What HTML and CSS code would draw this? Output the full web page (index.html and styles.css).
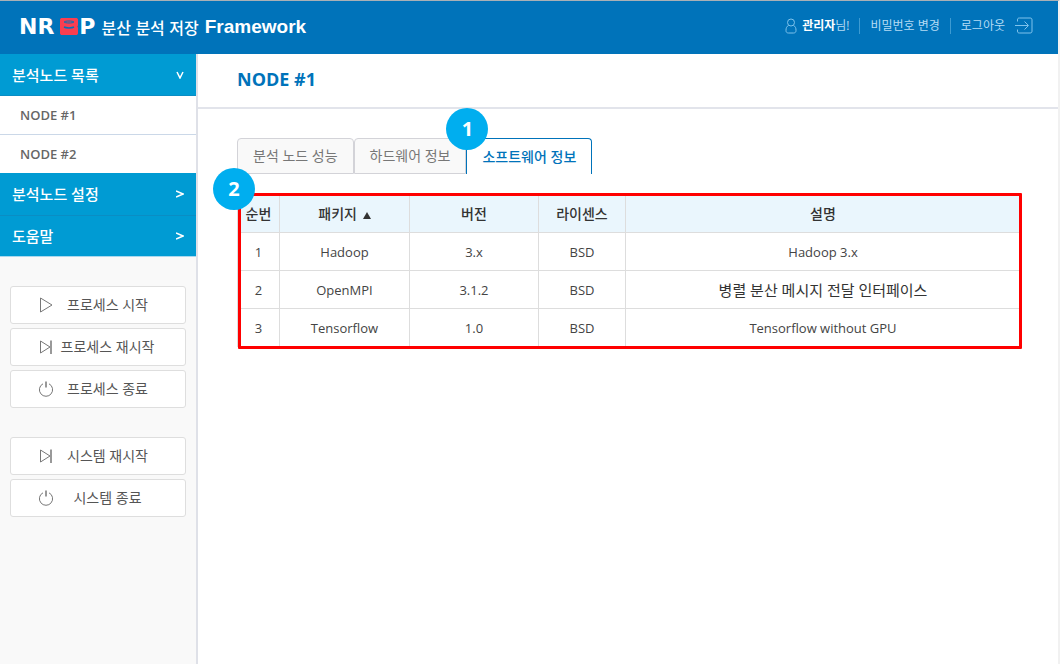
FILE: index.html
```html
<!DOCTYPE html>
<html lang="ko">
<head>
<meta charset="utf-8">
<title>NRBP 분산 분석 저장 Framework</title>
<link rel="stylesheet" href="styles.css">
</head>
<body>
<svg class="sprite" aria-hidden="true">
  <symbol id="play" viewBox="0 0 16 16"><path d="M2.500 1v14L14 8z"/></symbol>
  <symbol id="restart" viewBox="0 0 16 16"><path d="M2.500 2v12L12 8z"/><path d="M13 1.500v13.500" stroke-width="1.500"/></symbol>
  <symbol id="power" viewBox="0 0 16 16"><path d="M5 2.800a6.600 6.600 0 1 0 6 0"/><path d="M8 .5v6" stroke-width="1.500"/></symbol>
</svg>
<header class="topbar">
  <div class="brand">
    <span class="logo">NR<svg class="logo-disk" viewBox="0 0 18 17" aria-hidden="true"><path fill="#fa3e50" d="M0 1.500C0 .6 1 0 2 0h14c1 0 2 .6 2 1.500V7c0 .8-.3 1.300-.8 1.600.5.3.8.8.8 1.600v5.300c0 .9-1 1.500-2 1.500H2c-1 0-2-.6-2-1.500z"/><path fill="none" stroke="#0073ba" d="M4 4c1-1.300 9-1.300 10 0-1 1.300-9 1.300-10 0z"/><path fill="none" stroke="#0073ba" stroke-width="1.500" d="M4 9c2 1.200 8 1.200 10 0"/></svg>P</span>
    <span class="brand-ko">분산 분석 저장</span>
    <span class="brand-en">Framework</span>
  </div>
  <nav class="account">
    <span class="user"><svg class="user-icon" viewBox="0 0 12 16" aria-hidden="true"><circle cx="6" cy="4.500" r="3.500"/><path d="M3.500 7.500C1.500 8.500 1 10 1 12.500c0 1.600.8 2.500 2.500 2.500h5c1.700 0 2.500-.9 2.500-2.500 0-2.500-.5-4-2.500-5"/></svg><span><strong>관리자</strong>님!</span></span>
    <a class="account-link" href="#">비밀번호 변경</a>
    <a class="account-link" href="#">로그아웃<svg class="logout-icon" viewBox="0 0 18 17" aria-hidden="true"><path d="M2.500 4.500V3c0-1.500.5-2 2-2h10.500c1.500 0 2 .5 2 2v11c0 1.500-.5 2-2 2H4.500c-1.500 0-2-.5-2-2v-1.500M0 8.500h13M9.500 4.500l4 4-4 4"/></svg></a>
  </nav>
</header>
<div class="layout">
  <aside class="sidebar">
    <nav class="menu">
      <a class="menu-head" href="#">분석노드 목록<svg class="caret" viewBox="0 0 8 8" aria-hidden="true"><path d="M1 1l3 6 3-6"/></svg></a>
      <a class="menu-node" href="#">NODE #1</a>
      <a class="menu-node" href="#">NODE #2</a>
      <a class="menu-head" href="#">분석노드 설정<svg class="caret" viewBox="0 0 8 8" aria-hidden="true"><path d="M0 1l7 3-7 3"/></svg></a>
      <a class="menu-head" href="#">도움말<svg class="caret" viewBox="0 0 8 8" aria-hidden="true"><path d="M0 1l7 3-7 3"/></svg></a>
    </nav>
    <div class="actions">
      <button class="action" type="button"><svg class="icon"><use href="#play"/></svg><span class="action-label">프로세스 시작</span></button>
      <button class="action" type="button"><svg class="icon"><use href="#restart"/></svg><span class="action-label">프로세스 재시작</span></button>
      <button class="action" type="button"><svg class="icon"><use href="#power"/></svg><span class="action-label">프로세스 종료</span></button>
    </div>
    <div class="actions">
      <button class="action" type="button"><svg class="icon"><use href="#restart"/></svg><span class="action-label">시스템 재시작</span></button>
      <button class="action" type="button"><svg class="icon"><use href="#power"/></svg><span class="action-label">시스템 종료</span></button>
    </div>
  </aside>
  <main class="main">
    <h1 class="title">NODE #1</h1>
    <div class="content">
      <div class="tabs" role="tablist">
        <button class="tab" type="button" role="tab">분석 노드 성능</button>
        <button class="tab" type="button" role="tab">하드웨어 정보</button>
        <button class="tab tab-active" type="button" role="tab" aria-selected="true">소프트웨어 정보<span class="badge badge-tab">1</span></button>
      </div>
      <div class="packages">
        <table class="table">
          <colgroup><col class="col-no"><col class="col-package"><col class="col-version"><col class="col-license"><col></colgroup>
          <thead>
            <tr><th>순번</th><th>패키지 <svg class="sort" viewBox="0 0 8 7" aria-hidden="true"><path d="M4 0l4 7H0z"/></svg></th><th>버전</th><th>라이센스</th><th>설명</th></tr>
          </thead>
          <tbody>
            <tr><td>1</td><td>Hadoop</td><td>3.x</td><td>BSD</td><td>Hadoop 3.x</td></tr>
            <tr><td>2</td><td>OpenMPI</td><td>3.1.2</td><td>BSD</td><td class="ko">병렬 분산 메시지 전달 인터페이스</td></tr>
            <tr><td>3</td><td>Tensorflow</td><td>1.0</td><td>BSD</td><td>Tensorflow without GPU</td></tr>
          </tbody>
        </table>
        <span class="badge badge-table">2</span>
      </div>
    </div>
  </main>
</div>
</body>
</html>
```
FILE: styles.css
```css
* { box-sizing: border-box; }
body {
  margin: 0;
  min-height: 100vh;
  display: flex;
  flex-direction: column;
  border-top: 1px solid #a9b0b6;
  border-right: 2px solid #f1f1f1;
  background: #fff;
  color: #333;
  font: 13px/20px "Open Sans", "Noto Sans CJK KR", sans-serif;
}
a { color: inherit; text-decoration: none; }
button { font: inherit; cursor: pointer; }
.sprite { position: absolute; width: 0; height: 0; }

.topbar {
  display: flex;
  align-items: center;
  justify-content: space-between;
  height: 53px;
  padding: 0 25px 0 19px;
  background: #0073ba;
  color: #fff;
}
.brand { display: flex; align-items: center; gap: 6px; padding-bottom: 2px; }
.logo {
  display: flex;
  align-items: center;
  font: bold 22px/24px "DejaVu Sans", sans-serif;
}
.logo-disk { width: 18px; height: 17px; margin: 0 1px 0 6px; }
.brand-ko { font-family: "Noto Sans CJK KR", sans-serif; font-size: 16px; font-weight: 500; }
.brand-en { font: bold 19px/24px "Liberation Sans", sans-serif; }

.account { display: flex; align-items: center; font-size: 12px; line-height: 16px; color: #b5dcf5; padding-bottom: 4px; }
.user { display: flex; align-items: center; gap: 5px; padding-right: 10px; }
.user strong { color: #fff; }
.user-icon, .logout-icon { fill: none; stroke: #7fc3ec; stroke-width: 1; }
.user-icon { width: 12px; height: 16px; }
.account-link { display: flex; align-items: center; height: 16px; padding: 0 10px; border-left: 1px solid #3d9bd2; }
.account-link:last-child { padding-right: 0; }
.logout-icon { width: 18px; height: 17px; margin-left: 10px; }

.layout { flex: 1; display: flex; }
.sidebar { width: 198px; flex: none; border-right: 2px solid #dfe1e8; background: #f9f9f9; }
.menu { border-bottom: 1px solid #a9d8ee; }
.menu-head {
  display: flex;
  align-items: center;
  justify-content: space-between;
  height: 42px;
  padding: 0 12px;
  background: #009bd3;
  color: #fff;
  font-size: 15px;
  font-weight: 500;
  border-bottom: 1px solid #0a8dc4;
}
.menu-node + .menu-head { height: 43px; }
.menu-head:last-child { border-bottom: 0; height: 40px; }
.caret { width: 8px; height: 8px; fill: none; stroke: #fff; stroke-width: 1.5; }
.menu-node {
  display: flex;
  align-items: center;
  height: 38px;
  padding-left: 20px;
  background: #fff;
  color: #666;
  font-size: 13px;
  font-weight: 600;
}
.menu-node + .menu-node { border-top: 1px solid #cbd8e8; height: 39px; }

.actions { display: flex; flex-direction: column; gap: 4px; padding: 29px 10px 0; }
.action {
  display: flex;
  align-items: center;
  height: 38px;
  padding: 0 24px 0 27px;
  border: 1px solid #dedede;
  border-radius: 3px;
  background: #fff;
  color: #555;
  font-size: 14px;
}
.icon { flex: none; width: 16px; height: 16px; fill: none; stroke: #777; stroke-width: 1; }
.action-label { flex: 1; text-align: center; white-space: nowrap; }

.main { flex: 1; min-width: 0; }
.title {
  margin: 0;
  padding: 12px 39px 14px;
  border-bottom: 2px solid #e2e4eb;
  color: #0073ba;
  font-size: 18px;
  line-height: 27px;
  font-weight: 700;
}
.content { padding: 29px 37px 0 39px; }
.tabs { display: flex; }
.tab {
  position: relative;
  height: 36px;
  padding: 0 15px;
  border: 1px solid #d3d3d8;
  border-radius: 4px 4px 0 0;
  background: #f9f9f9;
  color: #777;
  font-size: 14px;
}
.tab-active { border-color: #0073ba; border-bottom: 0; background: #fff; color: #0073ba; font-weight: 500; }
.packages { position: relative; margin-top: 20px; }
.packages::after {
  content: "";
  position: absolute;
  inset: -1px -1px -2px 1px;
  border: 3px solid #f00;
  border-radius: 1px;
}
.table { width: 100%; border-collapse: collapse; table-layout: fixed; }
.col-no { width: 42px; }
.col-package { width: 130px; }
.col-version { width: 129px; }
.col-license { width: 87px; }
.table th, .table td {
  height: 38px;
  padding: 0;
  border: 1px solid #ddd;
  text-align: center;
}
.table th { background: #eaf6fd; color: #333; font-size: 14px; font-weight: 500; }
.table td { color: #444; }
.table .ko { font-size: 15px; color: #333; }
.sort { width: 8px; height: 7px; margin-left: 2px; fill: #333; }
.badge {
  position: absolute;
  z-index: 1;
  display: flex;
  align-items: center;
  justify-content: center;
  width: 42px;
  height: 42px;
  border-radius: 50%;
  background: #00aeef;
  color: #fff;
  font-size: 20px;
  font-weight: 700;
}
.badge-tab { left: -21px; top: -31px; }
.badge-table { left: -24px; top: -26px; }
```
